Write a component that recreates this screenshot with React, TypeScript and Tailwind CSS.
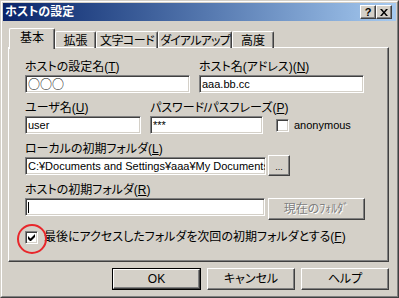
import React from 'react'

const raised =
  'border border-t-white border-l-white border-r-[#404040] border-b-[#404040] shadow-[inset_-1px_-1px_0_#808080]'
const sunken =
  'border border-t-[#808080] border-l-[#808080] border-r-white border-b-white shadow-[inset_1px_1px_0_#404040,inset_-1px_-1px_0_#D4D0C8]'

function Label({ text, acc }: { text: string; acc: string }) {
  return (
    <div className="h-[12px] leading-[12px] text-[12px] whitespace-nowrap">
      {text}(<span className="underline">{acc}</span>)
    </div>
  )
}

function Field({ children, w, caret }: { children?: React.ReactNode; w: string; caret?: boolean }) {
  return (
    <div
      className={`${sunken} ${w} mt-[2px] h-[18px] bg-white px-[2px] flex items-center overflow-hidden whitespace-nowrap text-[11px] leading-[14px]`}
    >
      {caret && <div className="w-px h-[11px] bg-black" />}
      {children}
    </div>
  )
}

function CheckBox({ checked }: { checked?: boolean }) {
  return (
    <div className={`${sunken} w-[13px] h-[13px] bg-white flex items-center justify-center shrink-0`}>
      {checked && (
        <svg width="7" height="7" viewBox="0 0 7 7">
          <path d="M0 2v3l2 2h1l4-4V0L2.5 4.5z" fill="black" />
        </svg>
      )}
    </div>
  )
}

function Tab({ label, w, active, fit }: { label: string; w: string; active?: boolean; fit?: string }) {
  return (
    <div
      className={`${w} ${
        active ? 'h-[21px] -mb-[2px] z-10 bg-[#D4D0C8]' : 'h-[17px] -mb-px'
      } border-t border-l border-r border-t-white border-l-white border-r-[#404040] shadow-[inset_-1px_0_0_#808080] rounded-t-[2px] flex justify-center pt-[3px] leading-[12px] whitespace-nowrap relative overflow-hidden`}
    >
      <span className={fit ?? 'text-[12px]'}>{label}</span>
    </div>
  )
}

function Btn({ children, def }: { children: React.ReactNode; def?: boolean }) {
  return (
    <div className={def ? 'border border-black' : ''}>
      <div
        className={`${raised} ${def ? 'w-[87px] h-[20px]' : 'w-[88px] h-[22px]'} flex items-center justify-center text-[12px] leading-[12px]`}
      >
        {children}
      </div>
    </div>
  )
}

export default function App() {
  return (
    <div className="w-[399px] h-[298px] bg-[#D4D0C8] text-black font-['Liberation_Sans','Noto_Sans_CJK_JP',sans-serif] [font-feature-settings:'palt'] relative overflow-hidden">
      <div className="w-full h-full border border-t-[#D4D0C8] border-l-[#D4D0C8] border-r-[#404040] border-b-[#404040]">
        <div className="w-full h-full border border-t-white border-l-white border-r-[#808080] border-b-[#808080] p-px">
          {/* title bar */}
          <div className="h-[18px] bg-gradient-to-r from-[#0A246A] to-[#A6CAF0] flex items-center pl-[2px] pr-[2px]">
            <span className="text-white font-bold text-[12px] leading-[12px] flex-1">ホストの設定</span>
            <div className={`${raised} w-[16px] h-[14px] flex items-center justify-center bg-[#D4D0C8] text-[11px] leading-[11px] font-bold font-['Liberation_Sans',sans-serif]`}>
              ?
            </div>
            <div className={`${raised} w-[16px] h-[14px] flex items-center justify-center bg-[#D4D0C8]`}>
              <svg width="8" height="7" viewBox="0 0 8 7">
                <path d="M0 0h2l2 2.5L6 0h2L5 3.5 8 7H6L4 4.5 2 7H0l3-3.5z" fill="black" />
              </svg>
            </div>
            <div className="w-[2px]" />
          </div>

          {/* tabs */}
          <div className="ml-[6px] mt-[7px] h-[19px] flex items-end">
            <Tab label="基本" w="w-[46px]" active />
            <Tab label="拡張" w="w-[41px]" />
            <Tab label="文字コード" w="w-[62px]" fit="text-[12px] tracking-[-0.5px]" />
            <Tab label="ダイアルアップ" w="w-[74px]" fit="text-[12px] tracking-[-0.8px]" />
            <Tab label="高度" w="w-[42px]" />
          </div>

          {/* panel */}
          <div className={`${raised} ml-[5px] w-[381px] h-[215px] pl-[16px] pt-[13px]`}>
            <div className="flex gap-[9px]">
              <div className="w-[165px]">
                <Label text="ホストの設定名" acc="T" />
                <Field w="w-[165px]">
                  <span className="font-['Noto_Sans_CJK_JP',sans-serif] [font-feature-settings:normal] text-[12px] leading-[12px]">○○○</span>
                </Field>
              </div>
              <div className="w-[165px]">
                <Label text="ホスト名(アドレス)" acc="N" />
                <Field w="w-[165px]">aaa.bb.cc</Field>
              </div>
            </div>

            <div className="flex items-end mt-[9px]">
              <div className="w-[116px]">
                <Label text="ユーザ名" acc="U" />
                <Field w="w-[116px]">user</Field>
              </div>
              <div className="w-[113px] ml-[9px]">
                <Label text="パスワード/パスフレーズ" acc="P" />
                <Field w="w-[113px]">***</Field>
              </div>
              <div className="ml-[13px] mb-[2px] flex items-center gap-[5px]">
                <CheckBox />
                <span className="text-[11px] leading-[13px]">anonymous</span>
              </div>
            </div>

            <div className="mt-[9px]">
              <Label text="ローカルの初期フォルダ" acc="L" />
              <div className="flex items-start gap-[2px]">
                <Field w="w-[241px]">C:¥Documents and Settings¥aaa¥My Documents</Field>
                <div className={`${raised} mt-0 w-[22px] h-[21px] flex items-end justify-center pb-[5px]`}>
                  <span className="text-[9px] leading-[6px]">...</span>
                </div>
              </div>
            </div>

            <div className="mt-[8px]">
              <Label text="ホストの初期フォルダ" acc="R" />
              <div className="flex items-start gap-[3px]">
                <Field caret w="w-[240px]" />
                <div className={`${raised} mt-[2px] w-[97px] h-[22px] flex items-center justify-center text-[12px] leading-[12px] text-[#808080] [text-shadow:1px_1px_0_#fff]`}>
                  現在のﾌｫﾙﾀﾞ
                </div>
              </div>
            </div>

            <div className="mt-[11px] flex items-center gap-[6px]">
              <CheckBox checked />
              <span className="text-[12px] leading-[13px]">
                最後にアクセスしたフォルダを次回の初期フォルダとする(<span className="underline">F</span>)
              </span>
            </div>
          </div>

          {/* buttons */}
          <div className="mt-[6px] w-[386px] flex justify-end gap-[6px]">
            <Btn def>OK</Btn>
            <Btn>キャンセル</Btn>
            <Btn>ヘルプ</Btn>
          </div>
        </div>
      </div>

      {/* annotation */}
      <div className="absolute left-[17px] top-[224px] w-[30px] h-[30px] rounded-full border-2 border-[#E8262B]" />
    </div>
  )
}
